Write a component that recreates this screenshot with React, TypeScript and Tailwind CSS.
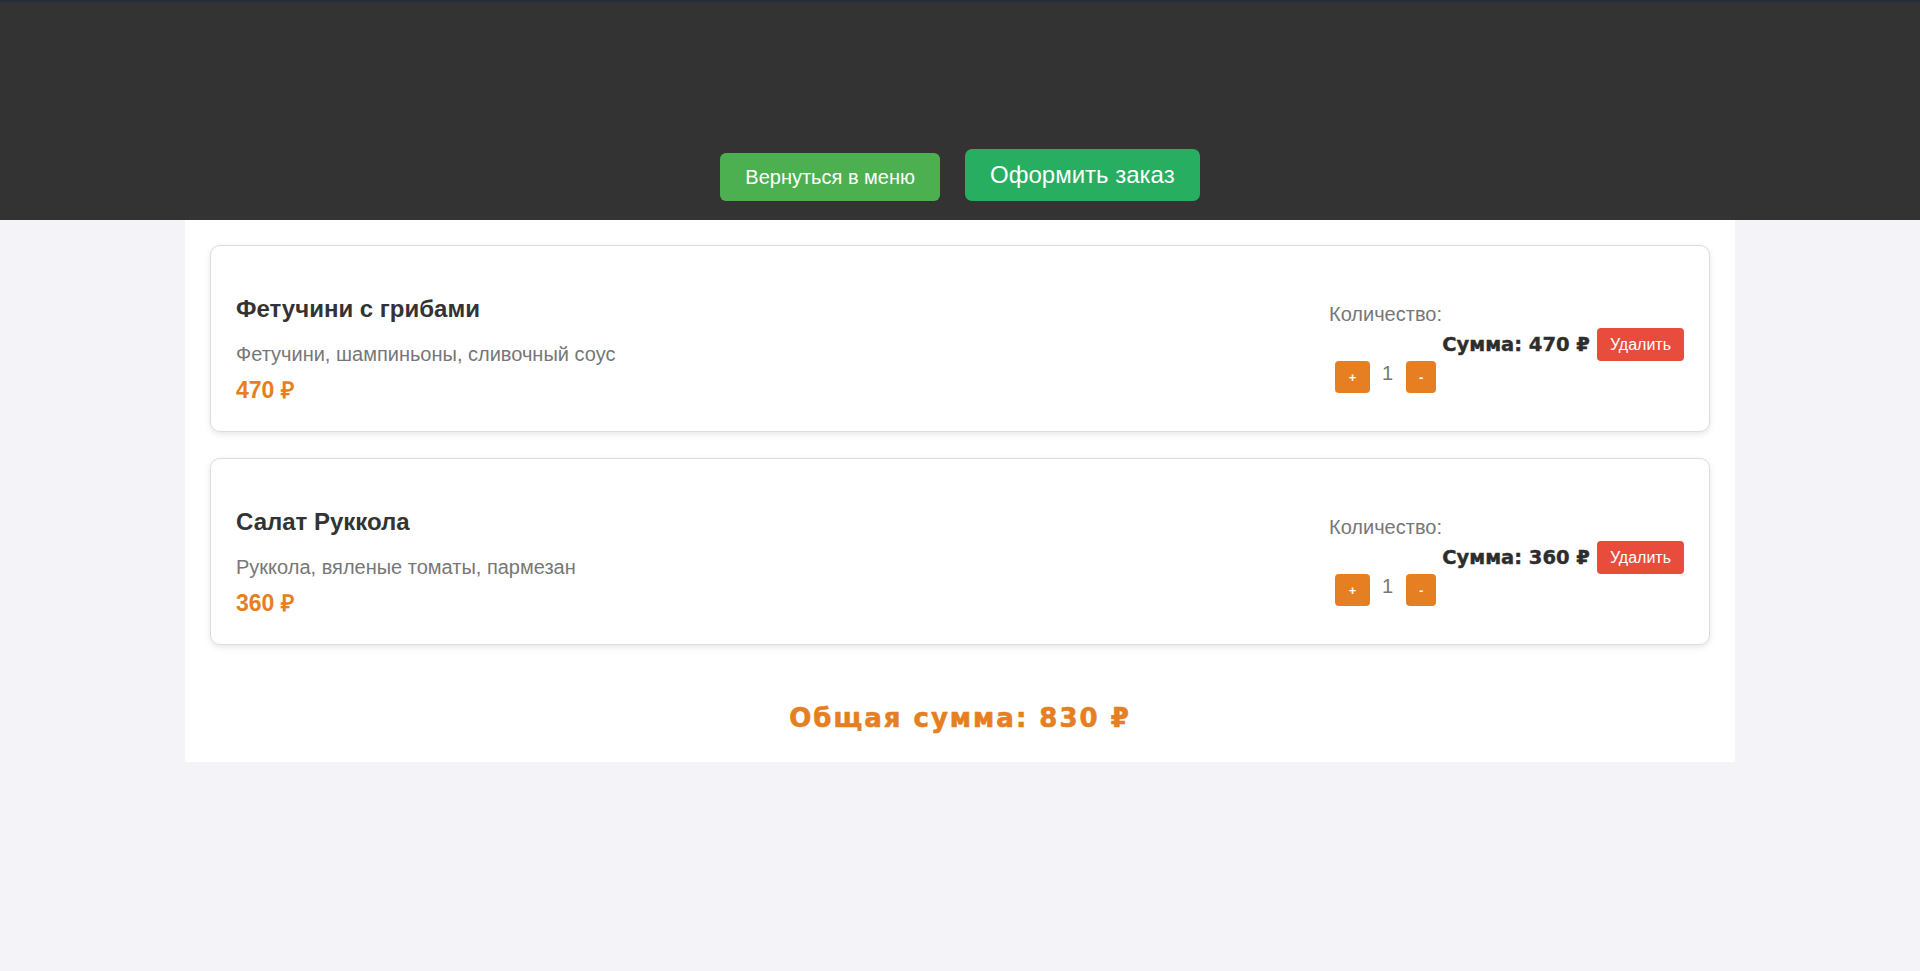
const items = [
  {
    title: 'Фетучини с грибами',
    description: 'Фетучини, шампиньоны, сливочный соус',
    price: 470,
    qty: 1,
  },
  {
    title: 'Салат Руккола',
    description: 'Руккола, вяленые томаты, пармезан',
    price: 360,
    qty: 1,
  },
];

function CartItem({ item }: { item: (typeof items)[number] }) {
  return (
    <div className="flex justify-between items-start mb-[26px] px-[25px] pt-[25px] pb-[28px] bg-white border border-[#dddddd] rounded-[10px] shadow-[0_2px_6px_rgba(0,0,0,0.1)]">
      {/* Left: name, description, price */}
      <div className="flex flex-col">
        <h3 className="mt-[24px] text-[24px] leading-[28px] font-bold text-[#333333]">{item.title}</h3>
        <p className="mt-[20px] text-[20px] leading-[23px] text-[#777777]">{item.description}</p>
        <p className="mt-[12px] text-[23px] leading-[25px] font-bold text-[#e67e22]">{item.price} ₽</p>
      </div>

      {/* Right: quantity, sum, delete */}
      <div className="mt-[32px] w-[355px] flex flex-col">
        <div className="text-[20px] leading-[23px] text-[#777777]">Количество:</div>
        <div className="mt-[2px] flex justify-end items-center gap-[7px]">
          <span className="font-['DejaVu_Sans',sans-serif] font-bold text-[19.5px] leading-[23px] text-[#2d2d2d] [-webkit-text-stroke:0.4px_#2d2d2d]">
            Сумма: {item.price * item.qty} ₽
          </span>
          <button className="h-[33px] px-[13px] rounded-[4px] bg-[#e74c3c] text-white text-[16px] leading-[18px]">
            Удалить
          </button>
        </div>
        <div className="flex items-start ml-[6px]">
          <button className="w-[35px] h-[32px] rounded-[4px] bg-[#e67e22] text-white text-[13px] font-bold leading-none">
            +
          </button>
          <span className="mt-[1px] ml-[12px] mr-[13px] text-[20px] leading-[23px] text-[#777777]">{item.qty}</span>
          <button className="w-[30px] h-[32px] rounded-[4px] bg-[#e67e22] text-white text-[13px] font-bold leading-none">
            -
          </button>
        </div>
      </div>
    </div>
  );
}

export default function App() {
  const total = items.reduce((s, i) => s + i.price * i.qty, 0);

  return (
    <div className="min-h-screen bg-[#f3f3f8] font-['Liberation_Sans',Arial,sans-serif]">
      <header className="h-[220px] bg-[#333333] border-t-2 border-[#252e39] flex items-end justify-center gap-[25px] pb-[19px]">
        <button className="px-[25px] py-[12.5px] rounded-[6px] bg-[#4caf50] text-white text-[20px] leading-[23px]">
          Вернуться в меню
        </button>
        <button className="px-[25px] py-[12px] rounded-[7px] bg-[#27ae60] text-white text-[24px] leading-[28px]">
          Оформить заказ
        </button>
      </header>

      <main className="w-[1550px] mx-auto bg-white px-[25px] pt-[25px] pb-[27px]">
        {items.map((item) => (
          <CartItem key={item.title} item={item} />
        ))}

        <h2 className="mt-[56px] text-center font-['DejaVu_Sans',sans-serif] font-bold text-[26px] leading-[34px] tracking-[2px] text-[#e67e22] [-webkit-text-stroke:0.6px_#e67e22]">
          Общая сумма: {total} ₽
        </h2>
      </main>
    </div>
  );
}
